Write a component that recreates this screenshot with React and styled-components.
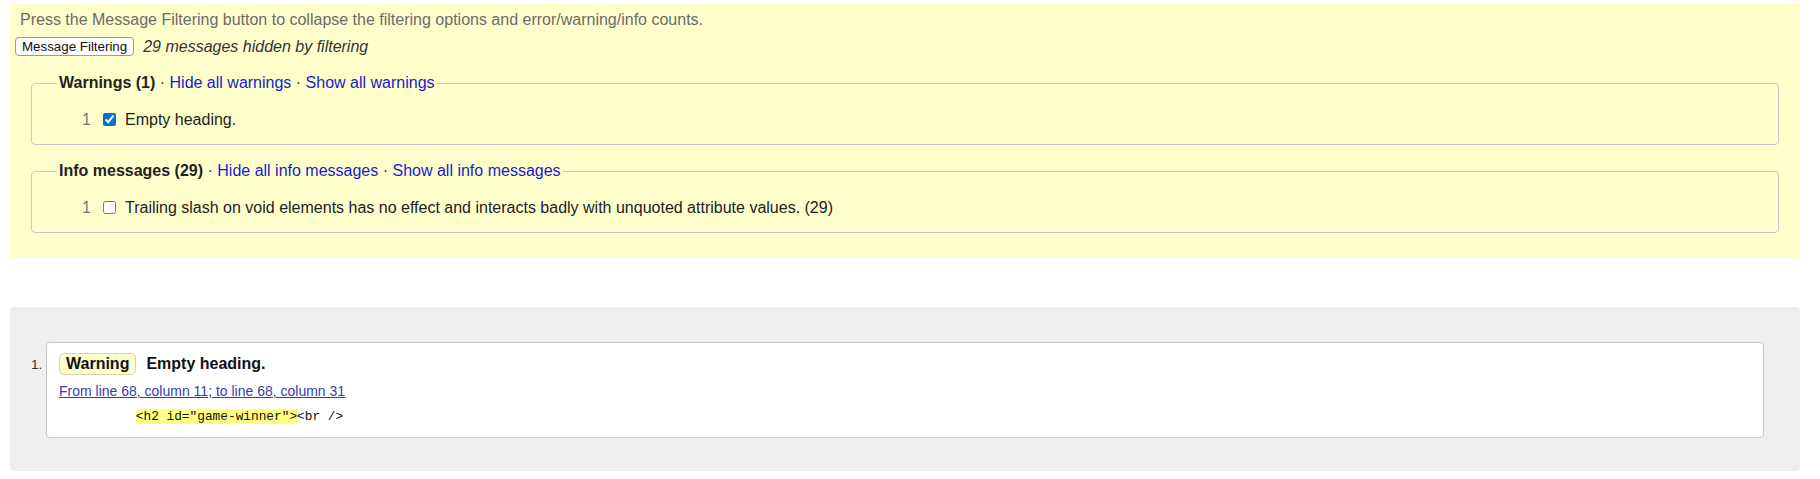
import React from "react";
import styled, { createGlobalStyle } from "styled-components";

const GlobalStyle = createGlobalStyle`
  html, body { margin: 0; padding: 0; background: #fff; }
  body { font-family: "Liberation Sans", Arial, sans-serif; font-size: 16px; color: #222; }
`;

const Page = styled.div`
  padding: 4px 20px 10px 10px;
`;

const Filters = styled.section`
  background: #ffffcc;
  padding: 7px 21px 24px 5px;
`;

const Hint = styled.p`
  margin: 0 0 0 5px;
  color: #6b6b6b;
  line-height: 18px;
`;

const FilterBar = styled.div`
  display: flex;
  align-items: center;
  gap: 9px;
  margin-top: 8px;
`;

const ToggleButton = styled.button`
  font-family: "Liberation Sans", Arial, sans-serif;
  font-size: 13.33px;
  color: #111;
  background: #fff;
  border: 1px solid #9a9a9a;
  border-radius: 4px;
  padding: 0 6px;
  height: 19px;
  line-height: 16px;
`;

const HiddenNote = styled.em`
  color: #333;
  line-height: 18px;
`;

const Group = styled.fieldset`
  margin: ${(p) => (p.$first ? "18px" : "17px")} 0 0 16px;
  padding: 0 12px 0 25px;
  border: 1px solid #c8c8c8;
  border-radius: 4px;
`;

const Legend = styled.legend`
  padding: 0 2px;
  line-height: 18px;
  color: #333;
`;

const LegendTitle = styled.b`
  color: #222;
`;

const FilterLink = styled.a`
  color: #1a1ad0;
  text-decoration: none;
  cursor: pointer;
`;

const FilterRow = styled.div`
  display: flex;
  align-items: center;
  padding: 18px 0 15px 25px;
  line-height: 19px;
`;

const Count = styled.span`
  color: #777;
  width: 21px;
`;

const Check = styled.input`
  width: 13px;
  height: 13px;
  margin: 0 9px 0 0;
  accent-color: #0b6fd6;
`;

const RowLabel = styled.label`
  color: #222;
`;

const Results = styled.ol`
  margin: 50px 0 0 0;
  padding: 35px 36px 33px 36px;
  background: #eeeeee;
  border-radius: 4px;
  list-style: decimal;
`;

const ResultItem = styled.li`
  background: #fff;
  border: 1px solid #c8c8c8;
  border-radius: 4px;
  padding: 10px 12px 13px 12px;

  &::marker {
    font-size: 13.5px;
    color: #333;
  }
`;

const ResultHead = styled.p`
  display: flex;
  align-items: center;
  gap: 10px;
  margin: 0;
`;

const Badge = styled.strong`
  background: #ffffcc;
  border: 1px solid #d4d4a8;
  border-radius: 5px;
  padding: 0 6px;
  line-height: 20px;
  color: #111;
`;

const Message = styled.span`
  font-weight: bold;
  color: #111;
`;

const Location = styled.a`
  display: inline-block;
  margin-top: 8px;
  font-size: 14px;
  line-height: 16px;
  color: #3a3ab0;
  text-decoration: underline;
  cursor: pointer;
`;

const Extract = styled.pre`
  margin: 9px 0 0 0;
  font-family: "Liberation Mono", "DejaVu Sans Mono", monospace;
  font-size: 12.8px;
  line-height: 15px;
  color: #111;
`;

const Mark = styled.b`
  font-weight: normal;
  background: #ffff80;
`;

export default function App() {
  return (
    <>
      <GlobalStyle />
      <Page>
        <Filters>
          <Hint>
            Press the Message Filtering button to collapse the filtering options and error/warning/info counts.
          </Hint>
          <FilterBar>
            <ToggleButton type="button">Message Filtering</ToggleButton>
            <HiddenNote>29 messages hidden by filtering</HiddenNote>
          </FilterBar>
          <Group $first>
            <Legend>
              <LegendTitle>Warnings (1)</LegendTitle> · <FilterLink>Hide all warnings</FilterLink> ·{" "}
              <FilterLink>Show all warnings</FilterLink>
            </Legend>
            <FilterRow>
              <Count>1</Count>
              <Check type="checkbox" defaultChecked />
              <RowLabel>Empty heading.</RowLabel>
            </FilterRow>
          </Group>
          <Group>
            <Legend>
              <LegendTitle>Info messages (29)</LegendTitle> · <FilterLink>Hide all info messages</FilterLink> ·{" "}
              <FilterLink>Show all info messages</FilterLink>
            </Legend>
            <FilterRow>
              <Count>1</Count>
              <Check type="checkbox" />
              <RowLabel>
                Trailing slash on void elements has no effect and interacts badly with unquoted attribute values. (29)
              </RowLabel>
            </FilterRow>
          </Group>
        </Filters>
        <Results>
          <ResultItem>
            <ResultHead>
              <Badge>Warning</Badge>
              <Message>Empty heading.</Message>
            </ResultHead>
            <Location>From line 68, column 11; to line 68, column 31</Location>
            <Extract>
              {"          "}
              <Mark>{'<h2 id="game-winner">'}</Mark>
              {"<br />"}
            </Extract>
          </ResultItem>
        </Results>
      </Page>
    </>
  );
}
